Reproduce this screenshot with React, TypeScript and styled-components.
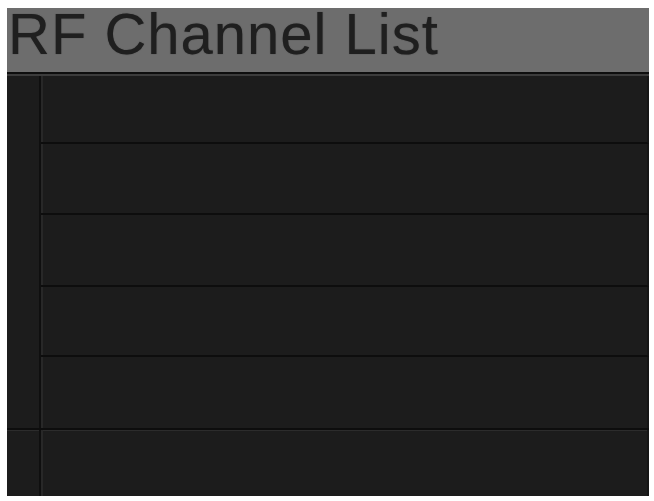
import React from 'react';
import styled, { createGlobalStyle } from 'styled-components';

const GlobalStyle = createGlobalStyle`
  html, body {
    margin: 0;
    padding: 0;
    background: #ffffff;
  }

  body {
    font-family: "Liberation Sans", Arial, sans-serif;
  }
`;

const Page = styled.div`
  width: 654px;
  height: 501px;
  padding: 8px 5px 5px 7px;
  box-sizing: border-box;
`;

const Panel = styled.section`
  width: 642px;
  height: 488px;
  display: flex;
  flex-direction: column;
  background: #1c1c1c;
`;

const Header = styled.header`
  height: 64px;
  display: flex;
  align-items: flex-end;
  padding-left: 1px;
  background: #6d6d6d;
  border-bottom: 2px solid #0e0e0e;
  box-shadow: 0 2px 0 #3c3c3c;
  position: relative;
  z-index: 1;
`;

const Title = styled.h1`
  margin: 0 0 9px;
  font-size: 58px;
  font-weight: 400;
  line-height: 1;
  letter-spacing: 1px;
  color: #1f1f1f;
  text-shadow: 0 0 1px rgba(30, 30, 30, 0.6);
  white-space: nowrap;
`;

const Body = styled.div`
  flex: 1;
  display: flex;
  flex-direction: column;
  padding-top: 2px;
`;

const Section = styled.div<{ $grow?: boolean }>`
  display: flex;
  flex: ${(p) => (p.$grow ? 1 : 'none')};
`;

const Gutter = styled.div`
  width: 32px;
  flex: none;
  border-right: 2px solid #0f0f0f;
  box-shadow: 2px 0 0 #282828;
`;

const Rows = styled.div`
  flex: 1;
  display: flex;
  flex-direction: column;
`;

const Row = styled.div<{ $h: number; $last?: boolean }>`
  height: ${(p) => p.$h}px;
  flex: none;
  border-bottom: ${(p) => (p.$last ? 'none' : '2px solid #0d0d0d')};
  box-sizing: border-box;
  border-right: 2px solid #151515;
`;

const FooterRow = styled(Section)`
  flex: 1;
  border-top: 2px solid #0d0d0d;
  box-shadow: inset 0 1px 0 #2c2c2c;
`;

const FooterCell = styled.div`
  flex: 1;
  border-right: 2px solid #151515;
`;

const rowHeights = [68, 71, 72, 70, 71];

export default function App() {
  return (
    <>
      <GlobalStyle />
      <Page>
        <Panel>
          <Header>
            <Title>RF Channel List</Title>
          </Header>
          <Body>
            <Section>
              <Gutter />
              <Rows>
                {rowHeights.map((h, i) => (
                  <Row key={i} $h={h} $last={i === rowHeights.length - 1} />
                ))}
              </Rows>
            </Section>
            <FooterRow $grow>
              <Gutter />
              <FooterCell />
            </FooterRow>
          </Body>
        </Panel>
      </Page>
    </>
  );
}
